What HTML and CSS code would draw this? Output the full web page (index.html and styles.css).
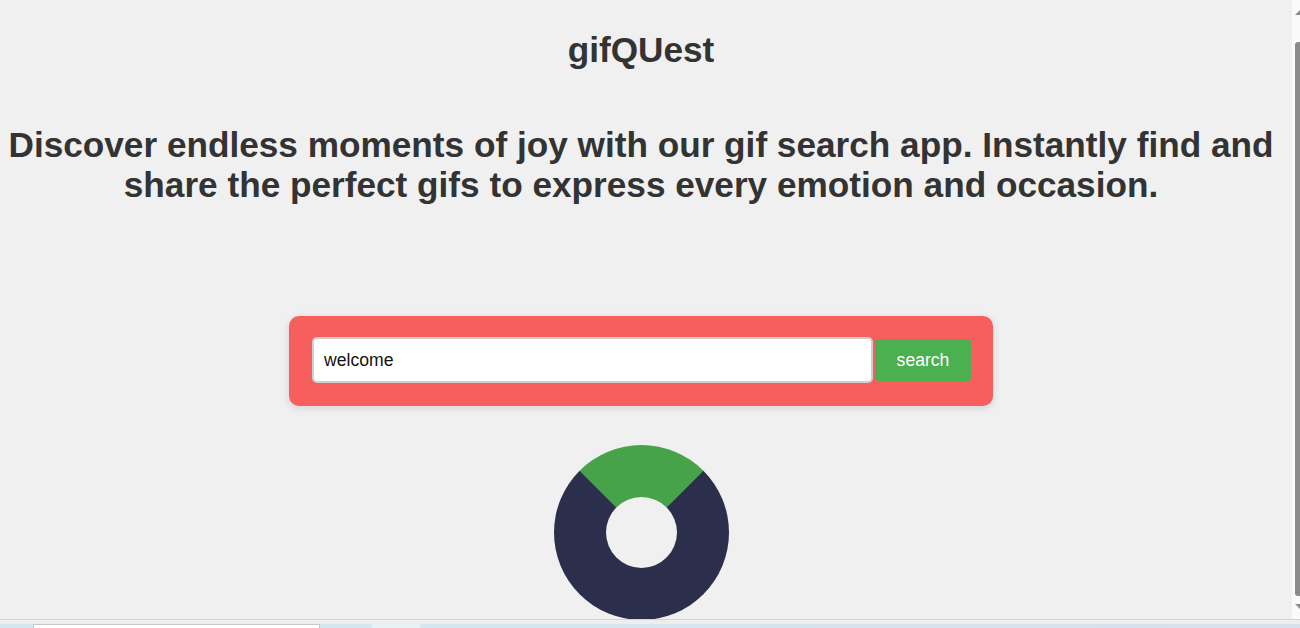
FILE: index.html
```html
<!DOCTYPE html>
<html lang="en">
<head>
<meta charset="utf-8">
<title>gifQUest</title>
<link rel="stylesheet" href="styles.css">
</head>
<body>
<div class="window">
  <div class="frame">
    <main class="page">
      <h1 class="title">gifQUest</h1>
      <h2 class="tagline">Discover endless moments of joy with our gif search app. Instantly find and share the perfect gifs to express every emotion and occasion.</h2>
      <form class="search">
        <input class="search-input" type="text" value="welcome">
        <button class="search-btn" type="button">search</button>
      </form>
      <div class="loader"></div>
    </main>
    <div class="scrollbar">
      <span class="arrow arrow-up"></span>
      <span class="thumb"></span>
      <span class="arrow arrow-down"></span>
    </div>
  </div>
  <div class="taskbar">
    <span class="tb tb-a"></span>
    <span class="tb tb-b"></span>
    <span class="tb tb-c"></span>
    <span class="tb tb-d"></span>
    <span class="tb tb-e"></span>
  </div>
</div>
</body>
</html>
```
FILE: styles.css
```css
* { box-sizing: border-box; }
html, body { margin: 0; padding: 0; }
body {
  width: 1300px;
  height: 628px;
  overflow: hidden;
  background: #f0f0f0;
  font-family: "Liberation Sans", Arial, sans-serif;
  color: #333;
}
.window { display: flex; flex-direction: column; height: 628px; }
.frame { display: flex; height: 620px; border-bottom: 1px solid #d4d4d4; }
.page {
  flex: 1;
  overflow: hidden;
  display: flex;
  flex-direction: column;
  align-items: center;
  padding: 0 18px 0 8px;
}
.title {
  margin: 30px 0 0;
  font-size: 35.2px;
  line-height: 40px;
  font-weight: bold;
  text-align: center;
}
.tagline {
  margin: 55px 0 0;
  font-size: 35.2px;
  line-height: 40px;
  font-weight: bold;
  text-align: center;
}
.search {
  margin-top: 111px;
  width: 704px;
  display: flex;
  align-items: center;
  padding: 21px 22px 23px 23px;
  background: #f75e5e;
  border-radius: 10px;
  box-shadow: 0 2px 8px rgba(0,0,0,0.12);
}
.search-input {
  width: 561px;
  height: 46px;
  border: 2px solid #cfcfcf;
  border-radius: 5px;
  padding: 0 10px;
  font-family: "Liberation Sans", Arial, sans-serif;
  font-size: 17.6px;
  color: #111;
  background: #fff;
  outline: none;
}
.search-btn {
  margin-left: 2px;
  width: 96px;
  height: 42px;
  border: 0;
  border-radius: 3px;
  background: #4caf50;
  color: #fff;
  font-family: "Liberation Sans", Arial, sans-serif;
  font-size: 17.6px;
}
.loader {
  margin-top: 39px;
  flex: none;
  width: 175px;
  height: 175px;
  border-radius: 50%;
  border: 52px solid #2c2f4c;
  border-top-color: #46a34a;
}
.scrollbar {
  width: 8px;
  flex: none;
  background: #fafafa;
  display: flex;
  flex-direction: column;
  align-items: flex-end;
  padding: 10px 0 10px;
}
.thumb {
  width: 5px;
  flex: 1;
  margin: 27px 0 8px;
  background: #8b8b8b;
  border-radius: 3px 0 0 3px;
}
.arrow { width: 0; height: 0; border-left: 5px solid transparent; }
.arrow-up { border-bottom: 5px solid #8b8b8b; }
.arrow-down { border-top: 5px solid #8b8b8b; }
.taskbar {
  flex: 1;
  display: flex;
  align-items: flex-end;
  background: #eeeeee;
}
.tb { height: 4px; display: block; }
.tb-a { width: 33px; background: #d4e6ee; }
.tb-b { width: 287px; height: 4px; background: #fff; border: 1px solid #c8c8c8; border-bottom: 0; }
.tb-c { width: 52px; background: #d4e6ee; }
.tb-d { width: 48px; background: #e8f2f6; }
.tb-e { flex: 1; background: linear-gradient(90deg, #d4e6ee, #d8e0ec); }
```
